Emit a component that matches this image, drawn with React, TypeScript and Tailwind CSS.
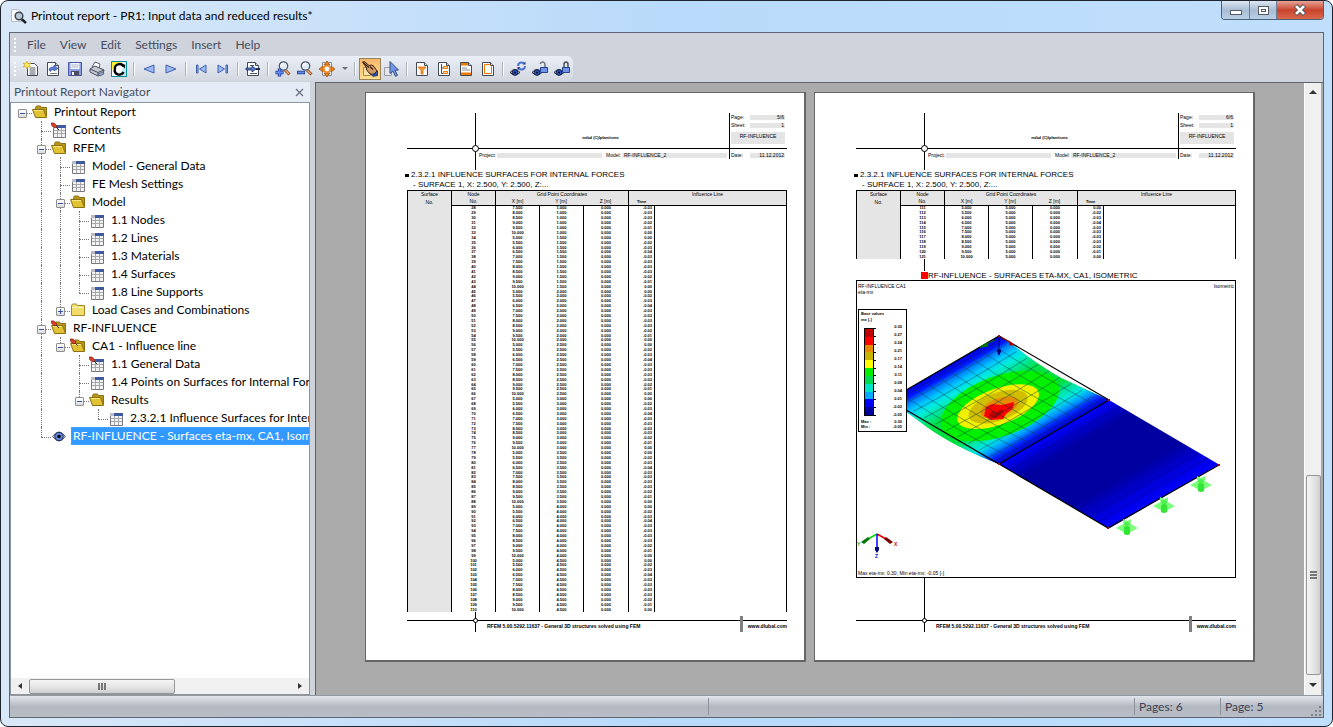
import type { ReactNode } from 'react';

type Icon = () => ReactNode;

/* ---------- shared icon parts ---------- */

function Svg({ children, size = 16 }: { children: ReactNode; size?: number }) {
  return (
    <svg width={size} height={size} viewBox="0 0 16 16" aria-hidden="true" className="shrink-0">
      {children}
    </svg>
  );
}

function Sheet() {
  return (
    <>
      <path d="M2.500 1.500h8l3 3v10h-11z" fill="#fff" stroke="#444a55" />
      <path d="M10.500 1.500v3h3" fill="#d5d9e2" stroke="#444a55" />
    </>
  );
}

function Lens({ children }: { children?: ReactNode }) {
  return (
    <>
      <path d="M10 9l4.500 4.500" stroke="#8a4b20" strokeWidth="3" />
      <path d="M10 9l4 4" stroke="#f0a870" strokeWidth="1.500" />
      <circle cx="8.500" cy="5" r="4.200" fill="#dfeaf6" stroke="#4b5568" strokeWidth="1.300" />
      <path d="M6 5a3 3 0 0 1 3-2.500" fill="none" stroke="#fff" strokeWidth="1.500" />
      {children}
    </>
  );
}

function Eye() {
  return (
    <>
      <path d="M0 11.500q5-6 10 0q-5 5-10 0z" fill="#b9c3d6" stroke="#23262e" />
      <circle cx="5" cy="11.500" r="2.800" fill="#2c56c4" stroke="#14204a" />
      <circle cx="5" cy="11.500" r="1" fill="#05070d" />
    </>
  );
}

/* ---------- toolbar icons ---------- */

const NewIcon = () => (
  <Svg>
    <path d="M4.500 2.500h7l3 3v9h-10z" fill="#fff" stroke="#444a55" />
    <path d="M6.500 7h6M6.500 9h6M6.500 11h6M6.500 13h6" stroke="#555b66" />
    <path d="M4 0l1 2.500 3-.5-2 2 2 2-3-.5-1 2.500-1-2.500-3 .5 2-2-2-2 3 .5z" fill="#ffe95a" stroke="#c9a41c" strokeWidth=".6" />
  </Svg>
);
const ReloadIcon = () => (
  <Svg>
    <Sheet />
    <path d="M4 9q0-3 5-3V4l4 3.500L9 10V8.500q-3 0-3.500 2z" fill="#5a7fd0" stroke="#27408c" strokeWidth=".6" />
    <path d="M5 12.500h7" stroke="#777" />
  </Svg>
);
const SaveIcon = () => (
  <Svg>
    <path d="M1.500 1.500h13v13h-13z" fill="#8c9ee0" stroke="#4a57a8" />
    <path d="M3.500 2h9v6h-9z" fill="#f4f6fb" />
    <path d="M4.500 4h7M4.500 6h7" stroke="#b3b9c9" />
    <path d="M4 10h8v4.500H4z" fill="#4a4f62" />
    <path d="M5 11h2v3H5z" fill="#fff" />
  </Svg>
);
const PrintIcon = () => (
  <Svg>
    <path d="M3 6l3-5 5 2-1 4z" fill="#fff" stroke="#5c6270" />
    <path d="M1 8l5-3 9 4-1 4-5 2-8-4z" fill="#c3c8d4" stroke="#4a4f5c" />
    <path d="M1 8l8 3.500L15 9M9 11.500V15" fill="none" stroke="#4a4f5c" />
    <path d="M9 13l5-2 1 2-4 2z" fill="#8ea4dc" stroke="#4a4f5c" strokeWidth=".6" />
  </Svg>
);
const CrossRefIcon = () => (
  <Svg>
    <path d="M.5.5h15v15H.5z" fill="#fff" stroke="#008c9c" />
    <path d="M1 1h9L1 9z" fill="#ffee2e" />
    <path d="M15 1v14H8z" fill="#bfe6ea" />
    <path d="M12.500 5.500A4.500 4 0 0 0 4 8A4.500 4 0 0 0 12.500 11" fill="none" stroke="#000" strokeWidth="2.400" />
    <path d="M10 3.500h4v4z" fill="#000" />
  </Svg>
);
const PrevIcon = () => (
  <Svg>
    <path d="M13 4v8L3 8z" fill="#9dbaf2" stroke="#3f5fae" />
  </Svg>
);
const NextIcon = () => (
  <Svg>
    <path d="M3 4v8l10-4z" fill="#9dbaf2" stroke="#3f5fae" />
  </Svg>
);
const FirstIcon = () => (
  <Svg>
    <path d="M3.500 4v8h1.500V4zM13 4v8L6.500 8z" fill="#9dbaf2" stroke="#3f5fae" />
  </Svg>
);
const LastIcon = () => (
  <Svg>
    <path d="M12.500 4v8H11V4zM3 4v8l6.500-4z" fill="#9dbaf2" stroke="#3f5fae" />
  </Svg>
);
const GotoIcon = () => (
  <Svg>
    <Sheet />
    <path d="M5 4.500h4M5 12.500h7" stroke="#555b66" />
    <path d="M1 7h6V5l4 3-4 3V9H1z" fill="#5a7fd0" stroke="#1c2c5c" strokeWidth=".8" />
    <path d="M11 8h4" stroke="#1c2c5c" strokeWidth="2" />
  </Svg>
);
const ZoomInIcon = () => (
  <Svg>
    <Lens>
      <path d="M4.500 7.500v8M.5 11.500h8" stroke="#203a8c" strokeWidth="3.400" />
      <path d="M4.500 8v7M1 11.500h7" stroke="#5f8af0" strokeWidth="1.800" />
    </Lens>
  </Svg>
);
const ZoomOutIcon = () => (
  <Svg>
    <Lens>
      <path d="M0 11.500h8" stroke="#203a8c" strokeWidth="3.400" />
      <path d="M.7 11.500h6.600" stroke="#5f8af0" strokeWidth="1.800" />
    </Lens>
  </Svg>
);
const FitIcon = () => (
  <Svg>
    <path d="M3.500 1.500h9v13h-9z" fill="#e9ecf2" stroke="#8a909c" />
    <path d="M8 0l3 4H5zM8 16l3-4H5zM0 8l4-3v6zM16 8l-4-3v6z" fill="#f08a1e" stroke="#8a4505" strokeWidth=".7" />
    <circle cx="8" cy="8" r="3.200" fill="#fff" stroke="#f08a1e" strokeWidth="1.600" />
  </Svg>
);
const HandIcon = () => (
  <Svg>
    <path d="M1.500 6.500h7v8h-7z" fill="#ffe2a8" stroke="#a08a50" />
    <path d="M.5 1q1-1 2.500 0l4 3.500q3-1.500 5 1l3 4.500-4 4-4-2-3-4 1-.5z" fill="#d29a62" stroke="#3c2412" />
    <path d="M1 1.500l6 5M8 5.500l3 3" stroke="#3c2412" strokeWidth="1.200" />
    <path d="M16 9.500v5l-5 1-2-2q5-.5 7-4z" fill="#2c4fae" stroke="#14204a" strokeWidth=".6" />
  </Svg>
);
const SelectIcon = () => (
  <Svg>
    <path d="M.5 6.500h7v8h-7z" fill="#e2e5ea" stroke="#9a9fa8" />
    <path d="M6 .5l8.500 8.500-3.500.3 2.500 5-2 1-2.500-5L6 12.500z" fill="#6f95e6" stroke="#3b4f80" />
  </Svg>
);
const FilterIcon = () => (
  <Svg>
    <Sheet />
    <path d="M4 6h8l-3 3.500V13H7V9.500z" fill="#f59b3c" stroke="#d96a00" strokeWidth=".8" />
  </Svg>
);
const OutlineIcon = () => (
  <Svg>
    <Sheet />
    <path d="M5.500 3v9.500H7M5.500 7H7" fill="none" stroke="#444a55" />
    <path d="M7.500 5.500h4v2h-4zM7.500 10.500h4v2h-4z" fill="#ffd9a8" stroke="#ee7a00" />
  </Svg>
);
const HeaderIcon = () => (
  <Svg>
    <Sheet />
    <path d="M3 2h7v2.500H3zM3 11.500h10v2.500H3z" fill="#ee7a00" />
    <path d="M4 7h5M4 9h8" stroke="#8a8f99" />
  </Svg>
);
const FrameIcon = () => (
  <Svg>
    <Sheet />
    <path d="M4.500 3.500h5l2 2v7h-7z" fill="#fff" stroke="#ee7a00" />
  </Svg>
);
const EyeRefreshIcon = () => (
  <Svg>
    <Eye />
    <path d="M8 5a3.500 3.500 0 0 1 6-2.500M15 5a3.500 3.500 0 0 1-6 2.500" fill="none" stroke="#4a70d0" strokeWidth="2" />
    <path d="M12.500 3.500h3V.5zM10.500 6h-3v3.500z" fill="#27408c" />
  </Svg>
);
const EyeUnlockIcon = () => (
  <Svg>
    <Eye />
    <path d="M8 3q1-2.500 3-2t2 2.500V6" fill="none" stroke="#6c7280" strokeWidth="1.500" />
    <path d="M8.500 6.500h7v5h-7z" fill="#6f95ea" stroke="#27408c" />
  </Svg>
);
const EyeLockIcon = () => (
  <Svg>
    <Eye />
    <path d="M10 6V3.500q0-2.500 2-2.500t2 2.500V6" fill="none" stroke="#4c525e" strokeWidth="1.500" />
    <path d="M8.500 6.500h7v5h-7z" fill="#6f95ea" stroke="#27408c" />
  </Svg>
);

const toolGroups: { label: string; icon: Icon; active?: boolean }[][] = [
  [
    { label: 'New report', icon: NewIcon },
    { label: 'Reload', icon: ReloadIcon },
    { label: 'Save', icon: SaveIcon },
    { label: 'Print', icon: PrintIcon },
    { label: 'Cross references', icon: CrossRefIcon },
  ],
  [
    { label: 'Previous page', icon: PrevIcon },
    { label: 'Next page', icon: NextIcon },
  ],
  [
    { label: 'First page', icon: FirstIcon },
    { label: 'Last page', icon: LastIcon },
  ],
  [{ label: 'Go to page', icon: GotoIcon }],
  [
    { label: 'Zoom in', icon: ZoomInIcon },
    { label: 'Zoom out', icon: ZoomOutIcon },
    { label: 'Fit page', icon: FitIcon },
  ],
  [
    { label: 'Pan', icon: HandIcon, active: true },
    { label: 'Select', icon: SelectIcon },
  ],
  [
    { label: 'Filter contents', icon: FilterIcon },
    { label: 'Outline', icon: OutlineIcon },
    { label: 'Header and footer', icon: HeaderIcon },
    { label: 'Page frame', icon: FrameIcon },
  ],
  [
    { label: 'Refresh view', icon: EyeRefreshIcon },
    { label: 'Unlock view', icon: EyeUnlockIcon },
    { label: 'Lock view', icon: EyeLockIcon },
  ],
];

const menus = ['File', 'View', 'Edit', 'Settings', 'Insert', 'Help'];

function Grip() {
  return (
    <div className="mr-[3px] ml-1 flex w-[3px] flex-col gap-[2px]">
      <span className="size-[2px] bg-white" />
      <span className="size-[2px] bg-white" />
      <span className="size-[2px] bg-white" />
      <span className="size-[2px] bg-white" />
    </div>
  );
}

function TitleBar() {
  return (
    <header className="flex h-[31px] shrink-0 items-start justify-between pl-[10px]">
      <div className="flex h-[30px] items-center gap-1">
        <Svg>
          <path d="M.5 1.500h7l3 3v9H.5z" fill="#fbfcfe" stroke="#b6bfca" />
          <path d="M10.500 11l4.500 4" stroke="#1d2025" strokeWidth="2.500" />
          <circle cx="8" cy="8" r="3.800" fill="#b9c6d6" stroke="#3d444f" strokeWidth="1.500" />
        </Svg>
        <h1 className="text-xs whitespace-pre text-black">Printout report - PR1: Input data and reduced results*</h1>
      </div>
      <div className="mr-2 flex h-[19px] overflow-hidden rounded-b border border-t-0 border-[#4f6178]">
        <button aria-label="Minimize" className="flex w-[28px] items-center justify-center border-r border-[#6c7f96] bg-linear-to-b from-[#dde7f2] via-[#a9bdd4] to-[#b7cfe6]">
          <span className="mt-1 h-[5px] w-3 border border-[#555c68] bg-white" />
        </button>
        <button aria-label="Maximize" className="flex w-[27px] items-center justify-center border-r border-[#6c7f96] bg-linear-to-b from-[#dde7f2] via-[#a9bdd4] to-[#b7cfe6]">
          <span className="flex h-[9px] w-[11px] items-center justify-center border border-[#555c68] bg-white">
            <span className="h-[3px] w-[5px] border border-[#555c68]" />
          </span>
        </button>
        <button aria-label="Close" className="flex w-[46px] items-center justify-center bg-linear-to-b from-[#e5a396] via-[#c8422b] to-[#d9684c]">
          <Svg size={14}>
            <path d="M3 3l10 10M13 3L3 13" stroke="#545966" strokeWidth="5" />
            <path d="M3.500 3.500l9 9M12.500 3.500l-9 9" stroke="#fff" strokeWidth="3" />
          </Svg>
        </button>
      </div>
    </header>
  );
}

function MenuBar() {
  return (
    <nav className="flex h-[23px] shrink-0 items-center">
      <Grip />
      <div className="flex">
        {menus.map((m) => (
          <button key={m} className="px-[7px] text-xs text-[#454c5e]">
            {m}
          </button>
        ))}
      </div>
    </nav>
  );
}

function Toolbar() {
  return (
    <div role="toolbar" className="mb-px flex h-[25px] w-fit shrink-0 items-center rounded-r-md bg-linear-to-b from-[#eaeef6] to-[#d3d7df]">
      <Grip />
      {toolGroups.map((group, i) => (
        <div key={i} className="flex items-center">
          {i > 0 && <span className="mx-[3px] h-[14px] w-[2px] border-l border-[#aab0bc] bg-white" />}
          {group.map(({ label, icon: Glyph, active }) => (
            <button
              key={label}
              aria-label={label}
              className={
                active
                  ? 'flex h-[22px] w-[22px] items-center justify-center border border-[#9a8258] bg-linear-to-b from-[#f7b66c] to-[#ffe08e]'
                  : 'flex h-[22px] w-[22px] items-center justify-center'
              }
            >
              <Glyph />
            </button>
          ))}
          {i === 4 && (
            <button aria-label="Zoom options" className="flex h-[22px] w-[13px] items-center justify-center">
              <span className="border-x-[3px] border-t-[3px] border-x-transparent border-t-[#6b6f78]" />
            </button>
          )}
        </div>
      ))}
    </div>
  );
}

/* ---------- navigator ---------- */

function Pin() {
  return (
    <>
      <path d="M0 1l3 0 3 3-2 2-3-2z" fill="#d9402c" stroke="#8a1c10" strokeWidth=".7" />
      <path d="M5 5l3 3" stroke="#333" />
    </>
  );
}

function TableGlyph() {
  return (
    <>
      <path d="M2.500 3.500h12v12h-12z" fill="#f3f3f3" stroke="#77797e" />
      <path d="M2 3h13v3H2z" fill="#3e5a9e" />
      <path d="M2 3h4v3H2z" fill="#b9bcc4" />
      <path d="M3 8.500h11M3 11.500h11M6.500 6v9M10.500 6v9" stroke="#a5a7ab" />
    </>
  );
}

function OpenFolder() {
  return (
    <>
      <path d="M3.500 3.500l1-1.500h4l1 1.500h5v9h-11z" fill="#b8961a" stroke="#8a7012" />
      <path d="M.5 5.500h11l3 8h-11z" fill="#e2c232" stroke="#8a7012" />
      <path d="M2 6.500h9" stroke="#f8e680" />
    </>
  );
}

const treeIcons: Record<string, Icon> = {
  open: () => (
    <Svg>
      <OpenFolder />
    </Svg>
  ),
  openPin: () => (
    <Svg>
      <OpenFolder />
      <Pin />
    </Svg>
  ),
  closed: () => (
    <Svg>
      <path d="M1.500 13.500v-10l1-1.500h4l1 1.500h7v10z" fill="#f3dc6a" stroke="#a8892a" />
      <path d="M2 5.500h12" stroke="#fdf6c0" />
    </Svg>
  ),
  table: () => (
    <Svg>
      <TableGlyph />
    </Svg>
  ),
  tablePin: () => (
    <Svg>
      <TableGlyph />
      <Pin />
    </Svg>
  ),
  eye: () => (
    <Svg>
      <path d="M1.500 8.500q6.500-9 13 0q-6.500 9-13 0z" fill="#c6cedd" stroke="#5b606b" />
      <circle cx="8" cy="8.500" r="4.200" fill="#5f84d6" stroke="#1b2c60" />
      <circle cx="8" cy="8.500" r="1.800" fill="#06080f" />
    </Svg>
  ),
};

// guides: one character per column - "|" line, "t" tee, "l" elbow, "o" stub, " " nothing
const tree: { guides: string; toggle?: '-' | '+'; icon: string; label: string; selected?: boolean }[] = [
  { guides: 'o', toggle: '-', icon: 'open', label: 'Printout Report' },
  { guides: ' t', icon: 'tablePin', label: 'Contents' },
  { guides: ' t', toggle: '-', icon: 'open', label: 'RFEM' },
  { guides: ' |t', icon: 'table', label: 'Model - General Data' },
  { guides: ' |t', icon: 'table', label: 'FE Mesh Settings' },
  { guides: ' |t', toggle: '-', icon: 'open', label: 'Model' },
  { guides: ' ||t', icon: 'table', label: '1.1 Nodes' },
  { guides: ' ||t', icon: 'table', label: '1.2 Lines' },
  { guides: ' ||t', icon: 'table', label: '1.3 Materials' },
  { guides: ' ||t', icon: 'table', label: '1.4 Surfaces' },
  { guides: ' ||l', icon: 'table', label: '1.8 Line Supports' },
  { guides: ' |l', toggle: '+', icon: 'closed', label: 'Load Cases and Combinations' },
  { guides: ' t', toggle: '-', icon: 'openPin', label: 'RF-INFLUENCE' },
  { guides: ' |l', toggle: '-', icon: 'openPin', label: 'CA1 - Influence line' },
  { guides: ' | t', icon: 'tablePin', label: '1.1 General Data' },
  { guides: ' | t', icon: 'table', label: '1.4 Points on Surfaces for Internal Forces' },
  { guides: ' | l', toggle: '-', icon: 'open', label: 'Results' },
  { guides: ' |  l', icon: 'table', label: '2.3.2.1 Influence Surfaces for Internal Forces' },
  { guides: ' l', icon: 'eye', label: 'RF-INFLUENCE - Surfaces eta-mx, CA1, Isometric', selected: true },
];

function Guide({ kind, toggle }: { kind: string; toggle?: string }) {
  return (
    <span className="relative h-[18px] w-[19px] shrink-0">
      {(kind === '|' || kind === 't') && <span className="absolute top-0 left-[9px] h-full border-l border-dotted border-[#777]" />}
      {kind === 'l' && <span className="absolute top-0 left-[9px] h-[10px] border-l border-dotted border-[#777]" />}
      {'tlo'.includes(kind) && <span className="absolute top-[10px] left-[9px] w-[10px] border-t border-dotted border-[#777]" />}
      {toggle && (
        <button aria-label={toggle === '-' ? 'Collapse' : 'Expand'} className="absolute top-[6px] left-[5px] size-[9px] rounded-[1px] border border-[#8f8f8f] bg-linear-to-b from-white to-[#dcdcdc]">
          <span className="absolute top-[3px] left-[1px] h-px w-[5px] bg-[#3a52a0]" />
          {toggle === '+' && <span className="absolute top-[1px] left-[3px] h-[5px] w-px bg-[#3a52a0]" />}
        </button>
      )}
    </span>
  );
}

function Navigator() {
  return (
    <aside className="flex w-[300px] shrink-0 flex-col">
      <div className="flex h-[20px] shrink-0 items-center justify-between bg-[#e6ecf6] pr-[3px] pl-1">
        <h2 className="text-xs text-[#454c5e]">Printout Report Navigator</h2>
        <button aria-label="Close navigator" className="flex size-4 items-center justify-center">
          <svg width="9" height="9" viewBox="0 0 9 9" aria-hidden="true">
            <path d="M1 1l7 7M8 1L1 8" stroke="#6b7080" strokeWidth="1.300" />
          </svg>
        </button>
      </div>
      <div className="flex min-h-0 flex-1 flex-col border border-[#8e949e] bg-white">
        <ul role="tree" className="min-h-0 flex-1 overflow-hidden pl-[2px]">
          {tree.map((node, i) => {
            const Glyph = treeIcons[node.icon];
            const last = node.guides.length - 1;
            return (
              <li key={i} role="treeitem" aria-selected={!!node.selected} className="flex h-[18px] items-center">
                {node.guides.split('').map((kind, c) => (
                  <Guide key={c} kind={kind} toggle={c === last ? node.toggle : undefined} />
                ))}
                <span className="flex w-[20px] shrink-0 items-center">
                  <Glyph />
                </span>
                <span
                  className={
                    node.selected
                      ? 'h-[18px] flex-1 border border-dotted border-[#d98a3c] bg-[#3399ff] pl-px text-xs leading-4 whitespace-nowrap text-white'
                      : 'h-[18px] pl-[2px] text-xs leading-[18px] whitespace-nowrap text-black'
                  }
                >
                  {node.label}
                </span>
              </li>
            );
          })}
        </ul>
        <div className="flex h-[16px] shrink-0 items-center bg-[#f0f0f0]">
          <button aria-label="Scroll left" className="flex h-4 w-[18px] items-center justify-center">
            <span className="border-y-[3px] border-r-[4px] border-y-transparent border-r-[#333]" />
          </button>
          <div className="flex h-[15px] w-[146px] items-center justify-center gap-px rounded-[2px] border border-[#979797] bg-linear-to-b from-[#f5f5f5] via-[#e6e6e6] to-[#cfcfcf]">
            <span className="h-[7px] w-[2px] bg-[#777]" />
            <span className="h-[7px] w-[2px] bg-[#777]" />
            <span className="h-[7px] w-[2px] bg-[#777]" />
          </div>
          <span className="flex-1" />
          <button aria-label="Scroll right" className="flex h-4 w-[18px] items-center justify-center">
            <span className="border-y-[3px] border-l-[4px] border-y-transparent border-l-[#333]" />
          </button>
        </div>
      </div>
    </aside>
  );
}

/* ---------- report pages ---------- */

const influence = ['0.00', '-0.02', '-0.03', '-0.04', '-0.03', '-0.03', '-0.03', '-0.03', '-0.02', '-0.01', '0.00'];

function gridRows(from: number, to: number) {
  const rows = [];
  for (let node = from; node <= to; node++) {
    const step = (node - 1) % 11;
    const line = Math.floor((node - 1) / 11);
    rows.push({
      node,
      x: (5 + step / 2).toFixed(3),
      y: (line / 2).toFixed(3),
      z: '0.000',
      eta: influence[step],
    });
  }
  return rows;
}

function Field({ children, className = '' }: { children?: ReactNode; className?: string }) {
  return <span className={'h-[5px] bg-[#e5e5e5] leading-[5px] ' + className}>{children}</span>;
}

function PageHeader({ page }: { page: string }) {
  return (
    <div className="relative text-[5px] leading-[5px]">
      <div className="flex h-[36px] border-b border-black">
        <div className="w-[69px] border-r border-black" />
        <div className="flex-1 pt-[22px] pr-1 text-center text-[4px] font-bold">mtbd (C)lpfantisms</div>
        <div className="flex w-[58px] flex-col gap-[3px] border-l border-black pt-[2px] pr-[2px] pl-px">
          <div className="flex justify-between">
            <span>Page:</span>
            <Field className="w-[35px] pr-px text-right">{page}</Field>
          </div>
          <div className="flex justify-between">
            <span>Sheet:</span>
            <Field className="w-[35px] pr-px text-right">1</Field>
          </div>
          <div className="mt-px h-[12px] bg-[#e5e5e5] pt-[2px] text-center">RF-INFLUENCE</div>
        </div>
      </div>
      <div className="flex h-[21px] items-start">
        <div className="h-[21px] w-[69px] border-r border-black" />
        <div className="flex h-[10px] flex-1 items-center pt-[3px] pr-[2px] pl-[3px]">
          <span className="w-[18px]">Project:</span>
          <Field className="w-[105px]" />
          <span className="w-[20px] pl-1">Model:</span>
          <Field className="flex-1 pl-[2px]">RF-INFLUENCE_2</Field>
        </div>
        <div className="flex h-[10px] w-[58px] items-center justify-between border-l border-black pt-[3px] pr-[2px] pl-px">
          <span>Date:</span>
          <Field className="w-[35px] pr-px text-right">11.12.2012</Field>
        </div>
      </div>
      <span className="absolute top-[32px] left-[65px] size-[7px] rounded-full border border-black bg-white" />
    </div>
  );
}

function NodeTable({ from, to, className }: { from: number; to: number; className: string }) {
  return (
    <table className={'w-full shrink-0 table-fixed border-separate border-spacing-0 border-r border-black text-center text-[4px] leading-[4px] font-bold ' + className}>
      <colgroup>
        <col className="w-[44px]" />
        <col className="w-[44px]" />
        <col className="w-[44px]" />
        <col className="w-[44px]" />
        <col className="w-[45px]" />
        <col className="w-[26px]" />
        <col />
      </colgroup>
      <thead className="bg-[#e5e5e5] text-[5px] leading-[5px]">
        <tr className="h-[8px]">
          <th className="border-t border-l border-black p-0 font-normal">Surface</th>
          <th className="border-t border-l border-black p-0 font-normal">Node</th>
          <th colSpan={3} className="border-t border-l border-black p-0 font-normal">Grid Point Coordinates</th>
          <th colSpan={2} className="border-t border-l border-black p-0 font-normal">Influence Line</th>
        </tr>
        <tr className="h-[8px]">
          <th className="border-l border-black p-0 font-normal">No.</th>
          <th className="border-b border-l border-black p-0 font-normal">No.</th>
          <th className="border-b border-l border-black p-0 font-normal">X [m]</th>
          <th className="border-b border-black p-0 font-normal">Y [m]</th>
          <th className="border-b border-black p-0 font-normal">Z [m]</th>
          <th className="border-b border-l border-black p-0 text-[4px] font-bold">Time</th>
          <th className="border-b border-black p-0" />
        </tr>
      </thead>
      <tbody>
        {gridRows(from, to).map((r) => (
          <tr key={r.node}>
            <td className="border-l border-black bg-[#e5e5e5] p-0" />
            <td className="border-l border-black p-0">{r.node}</td>
            <td className="border-l border-black p-0">{r.x}</td>
            <td className="border-l border-black p-0">{r.y}</td>
            <td className="border-l border-black p-0">{r.z}</td>
            <td className="border-l border-black p-0 pr-[2px] text-right">{r.eta}</td>
            <td className="border-l border-black p-0" />
          </tr>
        ))}
      </tbody>
    </table>
  );
}

function PageFooter() {
  return (
    <div className="relative flex h-[12px] shrink-0 border-t border-black text-[5px] leading-[11px] font-bold">
      <div className="w-[69px] border-r border-black" />
      <div className="flex-1 pl-[11px]">RFEM 5.00.5292.11637 - General 3D structures solved using FEM</div>
      <div className="-mt-[5px] mr-[5px] h-[16px] w-[3px] bg-[#808080]" />
      <a href="#dlubal" className="text-black">
        www.dlubal.com
      </a>
      <span className="absolute -top-[3px] left-[66px] size-[5px] rounded-full border border-black bg-white" />
    </div>
  );
}

function ReportPage({ page, children }: { page: string; children: ReactNode }) {
  return (
    <section className="flex h-[570px] w-[441px] shrink-0 flex-col border-t border-r-2 border-b-2 border-l border-[#666] bg-white pt-[20px] pr-[17px] pb-[28px] pl-[41px] font-['Liberation_Sans',Arial,sans-serif] text-black">
      <PageHeader page={page} />
      <h3 className="-ml-[2px] flex h-[10px] items-center gap-[2px] text-[8px] leading-[10px] whitespace-nowrap">
        <span className="h-[3px] w-[4px] bg-black" />
        2.3.2.1 INFLUENCE SURFACES FOR INTERNAL FORCES
      </h3>
      <p className="h-[10px] pl-[6px] text-[8px] leading-[10px]">- SURFACE 1, X: 2.500, Y: 2.500, Z:...</p>
      {children}
      <PageFooter />
    </section>
  );
}

/* ---------- result plot ---------- */

const steps = [1, 2, 3, 4, 5, 6, 7, 8, 9];

function Support({ x, y }: { x: number; y: number }) {
  return (
    <g>
      <path d={`M${x - 11} ${y}l11-6 11 6-11 6z`} fill="#7dff7d" />
      <path d={`M${x - 4} ${y - 9}l4 2 4-2v4l-4 3-4-3z`} fill="#7dff7d" />
      <path d={`M${x - 3} ${y - 1}q3-2 6 0v7q-3 2-6 0z`} fill="#33e633" />
      <ellipse cx={x} cy={y - 4} rx="3" ry="2" fill="#4df04d" />
    </g>
  );
}

function Plate() {
  return (
    <svg viewBox="0 0 378 296" className="h-full w-full" role="img" aria-label="Isometric surface plot">
      <defs>
        <linearGradient id="loaded">
          <stop offset="0" stopColor="#0000d8" />
          <stop offset=".07" stopColor="#0018ff" />
          <stop offset=".11" stopColor="#0078ff" />
          <stop offset=".18" stopColor="#00c8ff" />
          <stop offset=".25" stopColor="#00ecdc" />
          <stop offset=".32" stopColor="#00e69a" />
          <stop offset=".4" stopColor="#00e048" />
          <stop offset=".64" stopColor="#00e03c" />
          <stop offset=".72" stopColor="#00e6a0" />
          <stop offset=".8" stopColor="#00e6e6" />
          <stop offset=".87" stopColor="#0096ff" />
          <stop offset=".93" stopColor="#0028ff" />
          <stop offset="1" stopColor="#0000c8" />
        </linearGradient>
        <linearGradient id="unloaded">
          <stop offset="0" stopColor="#0000ff" />
          <stop offset=".08" stopColor="#0000d2" />
          <stop offset=".2" stopColor="#0000a0" />
          <stop offset=".66" stopColor="#0000a0" />
          <stop offset=".85" stopColor="#0000d8" />
          <stop offset="1" stopColor="#0000ff" />
        </linearGradient>
        <clipPath id="sag">
          <path d="M142 55L160 67Q178 82 204 97Q230 109 252 119L142 183Q98 166 70 146Q46 128 32 119z" />
        </clipPath>
      </defs>

      <g clipPath="url(#sag)">
        <g transform="matrix(110 64 -110 64 142 55)">
          <rect x="-.2" y="-.2" width="1.200" height="1.400" fill="#00e03c" />
          <rect x="0" y="-.2" width="1" height="1.400" fill="url(#loaded)" />
        </g>
        <g transform="rotate(-20 143 125)">
          <ellipse cx="143" cy="125" rx="62" ry="30" fill="#00f000" />
          <ellipse cx="141" cy="125" rx="43" ry="18" fill="#f0f000" />
          <ellipse cx="141" cy="125" rx="31" ry="14" fill="#d2be00" />
          <ellipse cx="142" cy="126" rx="20" ry="9" fill="#e68c00" />
        </g>
        <path d="M127 135l2-9 6-3 10 1 12-3-1 6-7 6-3 5-12 1z" fill="#ff0000" />
        <path d="M131 136l4-6 5 1 4-3 3 2-4 4-4 3z" fill="#b40000" />
        <g transform="matrix(110 64 -110 64 142 55)" stroke="#004040" strokeOpacity=".45" strokeWidth="1" fill="none">
          {steps.map((s) => (
            <path key={s} d={`M${s / 10} .04Q${s / 10 + 0.02} .5 ${s / 10} .98M.03 ${s / 10}Q.5 ${s / 10 + 0.03} .97 ${s / 10}`} vectorEffect="non-scaling-stroke" />
          ))}
          <path d="M.04 0V1M.96 0V1" stroke="#000060" strokeDasharray="3 1" vectorEffect="non-scaling-stroke" />
        </g>
      </g>

      <g transform="matrix(110 64.500 -110 64 252 119)">
        <rect width="1" height="1" fill="url(#unloaded)" />
        <path d="M.1 0V1M.82 0V1M.9 0V1" stroke="#000078" strokeOpacity=".4" strokeWidth="1" fill="none" vectorEffect="non-scaling-stroke" />
      </g>
      <path d="M166 199q12 4 19 11M190 213q14 5 24 14" stroke="#fff" fill="none" />
      <path d="M32 119L142 55L252 119L142 183zM142 183L251 247L362 184" fill="none" stroke="#000" strokeWidth="1.200" />

      <path d="M129 63l9-4M123 66l7-4 1 3z" stroke="#007a00" fill="#007a00" />
      <path d="M144 56l9 5M152 60l5 4h-4z" stroke="#c80000" fill="#8c0000" />
      <path d="M142 56v17M140 69h4l-2 5z" stroke="#000078" fill="#000078" />
      <path d="M141 54h2v2h-2zM251 118h2v2h-2zM141 182h2v2h-2zM250 246h2v2h-2zM361 183h2v2h-2z" fill="#a01010" />

      <Support x={344} y={204} />
      <Support x={307} y={225} />
      <Support x={270} y={247} />

      <g strokeWidth="1.500">
        <path d="M20 253l9 5" stroke="#e60000" />
        <path d="M29 256l7 5-3 2-6-5z" fill="#780000" />
        <path d="M20 253l-9 5" stroke="#00dc00" />
        <path d="M11 256l-7 5 3 2 6-5z" fill="#007800" />
        <path d="M20 253v13" stroke="#0000ff" />
        <path d="M18 266h4v3l-2 3-2-3z" fill="#00007a" />
      </g>
      <g fontSize="5" fontWeight="bold">
        <text x="37" y="265" fill="#c80000">X</text>
        <text x="0" y="265" fill="#00a000">Y</text>
        <text x="18" y="277" fill="#0000c8">Z</text>
      </g>
    </svg>
  );
}

const scaleColors = ['#c00000', '#ff0000', '#e68a00', '#c8b400', '#ffff00', '#00f000', '#00dc50', '#00e6c8', '#00aaff', '#0000ff', '#0000a0'];
const scaleValues = ['0.30', '0.27', '0.24', '0.21', '0.17', '0.14', '0.11', '0.08', '0.04', '0.01', '-0.02', '-0.05'];

function Legend() {
  return (
    <div className="absolute top-[28px] left-px h-[123px] w-[49px] border border-black bg-white px-[2px] pt-[2px] text-[4px] leading-[4px] font-bold">
      <p>Base values</p>
      <p className="mt-[2px]">mx [-]</p>
      <div className="mt-[3px] flex h-[92px] justify-between pr-[2px]">
        <div className="flex">
          <div className="mt-[3px] ml-[3px] flex h-[88px] w-[10px] flex-col border border-black">
            {scaleColors.map((c) => (
              <span key={c} className="flex-1" style={{ background: c }} />
            ))}
          </div>
          <div className="mt-[3px] flex h-[88px] flex-col justify-between">
            {scaleValues.map((v) => (
              <span key={v} className="h-px w-[2px] bg-black" />
            ))}
          </div>
        </div>
        <ul className="flex flex-col justify-between text-right">
          {scaleValues.map((v) => (
            <li key={v}>{v}</li>
          ))}
        </ul>
      </div>
      <p className="mt-[3px] flex justify-between pr-[2px]">
        <span>Max :</span>
        <span>0.30</span>
      </p>
      <p className="mt-px flex justify-between pr-[2px]">
        <span>Min :</span>
        <span>-0.05</span>
      </p>
    </div>
  );
}

function ResultFigure() {
  return (
    <>
      <div className="ml-[68px] h-[12px] shrink-0 border-l border-black" />
      <h3 className="flex h-[9px] shrink-0 items-center pl-[65px] text-[8px] leading-[9px] whitespace-nowrap">
        <span className="size-[7px] bg-[#ff0000]" />
        RF-INFLUENCE - SURFACES ETA-MX, CA1, ISOMETRIC
      </h3>
      <figure className="relative h-[298px] shrink-0 border border-black text-[5px] leading-[6px]">
        <Plate />
        <p className="absolute top-[2px] left-px">
          RF-INFLUENCE CA1
          <br />
          eta-mx
        </p>
        <p className="absolute top-[2px] right-px">Isometric</p>
        <Legend />
        <figcaption className="absolute bottom-px left-px">Max eta-mx: 0.30, Min eta-mx: -0.05 [-]</figcaption>
      </figure>
    </>
  );
}

function Workspace() {
  return (
    <main className="flex min-w-0 flex-1 border-t border-l border-[#5f636b] bg-[#ababab]">
      <div className="flex min-w-0 flex-1 justify-center gap-2 overflow-hidden pt-[9px]">
        <ReportPage page="5/6">
          <NodeTable from={28} to={110} className="h-[422px]" />
          <div className="ml-[68px] flex-1 border-l border-black" />
        </ReportPage>
        <ReportPage page="6/6">
          <NodeTable from={111} to={121} className="h-[69px]" />
          <ResultFigure />
          <div className="ml-[68px] flex-1 border-l border-black" />
        </ReportPage>
      </div>
      <div className="mr-[2px] flex w-[17px] shrink-0 flex-col items-center border-l border-white bg-[#f0f0f0]">
        <button aria-label="Scroll up" className="flex size-[17px] items-center justify-center">
          <span className="border-x-[4px] border-b-[4px] border-x-transparent border-b-[#333]" />
        </button>
        <span className="flex-1" />
        <div className="flex h-[200px] w-[15px] flex-col items-center justify-center gap-px rounded-[2px] border border-[#979797] bg-linear-to-r from-[#f5f5f5] via-[#e6e6e6] to-[#cfcfcf]">
          <span className="h-[2px] w-[7px] bg-[#777]" />
          <span className="h-[2px] w-[7px] bg-[#777]" />
          <span className="h-[2px] w-[7px] bg-[#777]" />
        </div>
        <button aria-label="Scroll down" className="flex h-[20px] w-[17px] items-center justify-center">
          <span className="border-x-[4px] border-t-[4px] border-x-transparent border-t-[#333]" />
        </button>
      </div>
    </main>
  );
}

function StatusBar() {
  return (
    <footer className="flex h-[22px] shrink-0 items-center border-t border-[#9297a0] bg-linear-to-b from-[#e2e6ed] via-[#b4b8c1] to-[#b9bdc6] text-xs text-[#3c4254]">
      <span className="w-[698px]" />
      <span className="h-[17px] border-l border-[#8d929c]" />
      <span className="flex-1" />
      <span className="h-[17px] w-[86px] border-l border-[#8d929c] pl-1 leading-[17px]">Pages: 6</span>
      <span className="h-[17px] w-[90px] border-l border-[#8d929c] pl-1 leading-[17px]">Page: 5</span>
      <svg width="12" height="12" viewBox="0 0 12 12" className="mt-2 mr-px" aria-hidden="true">
        <path d="M9 1h2v2H9zM9 5h2v2H9zM9 9h2v2H9zM5 5h2v2H5zM5 9h2v2H5zM1 9h2v2H1z" fill="#7c818c" />
      </svg>
    </footer>
  );
}

export default function App() {
  return (
    <div className="flex h-screen w-full flex-col overflow-hidden rounded-lg border border-[#1f2530] bg-linear-to-r from-[#d9e8f8] via-[#b9dafa] to-[#bfdffc] font-[Lato,'Open_Sans',sans-serif]">
      <TitleBar />
      <div className="mx-2 mb-2 flex min-h-0 flex-1 flex-col border border-[#5c6675] bg-[#cfd3dc]">
        <MenuBar />
        <Toolbar />
        <div className="flex min-h-0 flex-1 gap-[5px]">
          <Navigator />
          <Workspace />
        </div>
        <StatusBar />
      </div>
    </div>
  );
}
